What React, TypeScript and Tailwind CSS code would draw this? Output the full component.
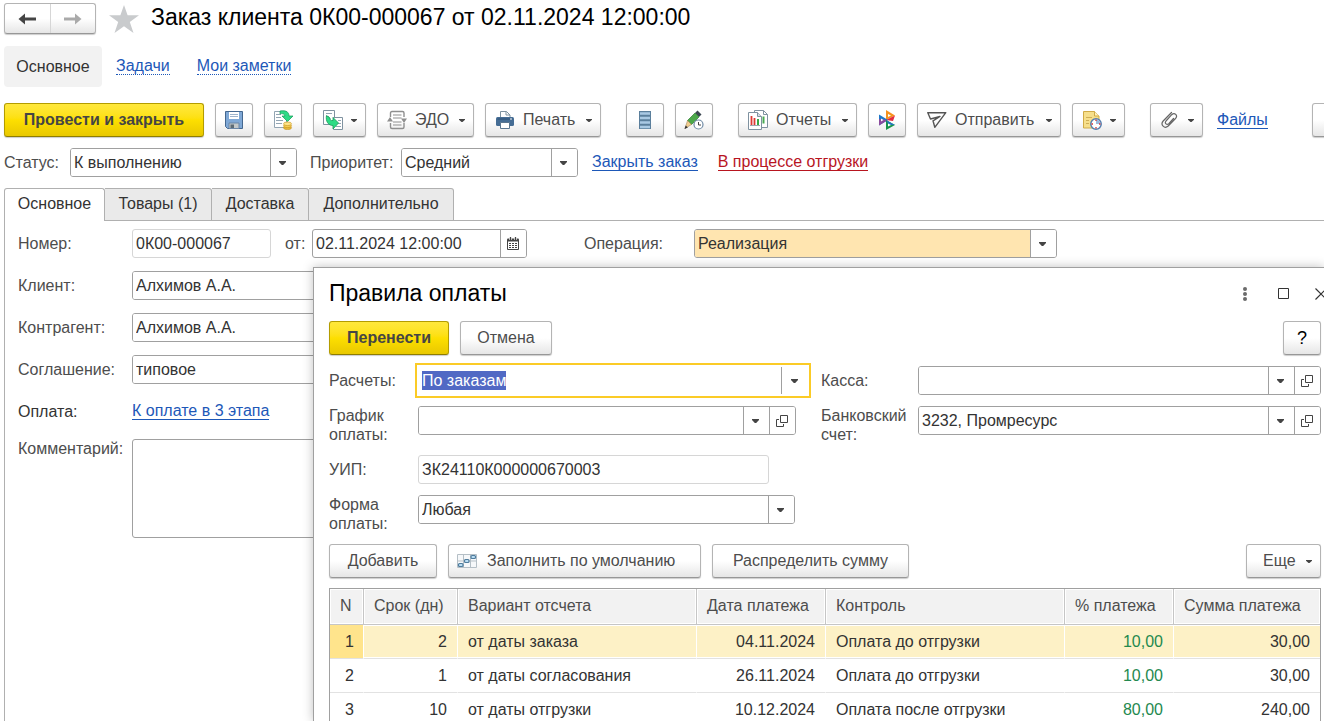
import { useEffect, useRef } from "react";
import type { ReactNode } from "react";

const stages = [
  { n: 1, days: 2, base: "от даты заказа", date: "04.11.2024", control: "Оплата до отгрузки", percent: "10,00", sum: "30,00" },
  { n: 2, days: 1, base: "от даты согласования", date: "26.11.2024", control: "Оплата до отгрузки", percent: "10,00", sum: "30,00" },
  { n: 3, days: 10, base: "от даты отгрузки", date: "10.12.2024", control: "Оплата после отгрузки", percent: "80,00", sum: "240,00" },
];

const fieldBox = "flex h-[29px] shrink-0 overflow-hidden rounded-[3px] border border-[#a0a0a0] bg-white text-[#333]";
const cellButton = "flex w-[26px] shrink-0 items-center justify-center border-l border-[#a0a0a0] bg-white pr-0.5";
const grayButton =
  "flex h-[34px] shrink-0 items-center rounded-[3px] border border-[#b4b4b4] border-b-[#979797] bg-linear-to-b from-white from-50% to-[#e6e6e6] text-[#4d4d4d] shadow-[0_1px_1px_#00000033]";
const yellowButton =
  "h-[34px] shrink-0 rounded-[3px] border border-[#b39c00] border-b-[#8f7d00] bg-linear-to-b from-[#ffe83b] via-[#fddf00] to-[#e9c800] font-bold text-[#454545] shadow-[0_1px_1px_#00000033]";
const linkStyle = "border-b border-[#1d58b8] leading-[16px] text-[#1d58b8]";

function Caret() {
  return (
    <svg width="6" height="3" viewBox="0 0 6 3" className="shrink-0" aria-hidden="true">
      <path d="M0 0h6v.8L3.500 3h-1L0 .8z" fill="#444" />
    </svg>
  );
}

function DropArrow() {
  return (
    <svg width="7" height="4" viewBox="0 0 7 4" aria-hidden="true">
      <path d="M0 0h7v1L4.200 4H2.800L0 1z" fill="#444" />
    </svg>
  );
}

function OpenCell({ label }: { label: string }) {
  return (
    <button className={cellButton} aria-label={label}>
      <svg width="12" height="12" viewBox="0 0 12 12" fill="none" stroke="#444" strokeWidth="1">
        <path d="M4.500.5h7v7h-7z" />
        <path d="M3 4.500H.5v7h7V9" />
      </svg>
    </button>
  );
}

function Combo({ id, value, width, tint, open }: { id: string; value: string; width: string; tint?: string; open?: string }) {
  return (
    <div className={`${fieldBox} ${width}`}>
      <select id={id} className={`min-w-0 flex-1 appearance-none px-[3px] outline-none ${tint ?? "bg-white"}`}>
        <option>{value}</option>
      </select>
      <span className={cellButton}>
        <DropArrow />
      </span>
      {open && <OpenCell label={open} />}
    </div>
  );
}

function ToolButton({ label, width, children }: { label: string; width: string; children: ReactNode }) {
  return (
    <button className={`${grayButton} ${width} justify-center`} aria-label={label}>
      {children}
    </button>
  );
}

function MenuButton({ label, width, children, text }: { label: string; width: string; children?: ReactNode; text?: string }) {
  return (
    <button className={`${grayButton} ${width} justify-between pr-2 pl-[9px]`} aria-label={label}>
      <span className="flex items-center gap-2">
        {children}
        {text}
      </span>
      <Caret />
    </button>
  );
}

function Svg({ children }: { children: ReactNode }) {
  return (
    <svg width="20" height="20" viewBox="0 0 20 20" fill="none" className="shrink-0" aria-hidden="true">
      {children}
    </svg>
  );
}

function SaveIcon() {
  return (
    <Svg>
      <path d="M1.500 1.500h17v17h-15l-2-2z" fill="#7fa8d6" stroke="#44678f" />
      <path d="M5 2h10v7H5z" fill="#fff" />
      <path d="M6 4.500h8M6 6.500h8" stroke="#9fb4cc" />
      <path d="M5 13h10v5.500H5z" fill="#c3c8c9" stroke="#6b87a8" />
      <path d="M6.500 14.500h3.500V18H6.500z" fill="#5d6b75" />
    </Svg>
  );
}

function PostIcon() {
  return (
    <Svg>
      <path d="M1.500 1.500h12v16h-12z" fill="#fff" stroke="#93a5b3" />
      <path d="M3 4.500h5M3 7.500h5M3 10.500h7M3 13.500h6" stroke="#93a5b3" />
      <path d="M7 1c6-1 9 1 9 5h4l-5.500 5.500L9 6h3C11.500 4 9.500 3 7 4z" fill="#2ddb85" stroke="#149a58" strokeWidth=".7" />
      <ellipse cx="14.500" cy="17.800" rx="4" ry="1.800" fill="#e8b93a" stroke="#c28f19" strokeWidth=".6" />
      <ellipse cx="14.500" cy="15.800" rx="4" ry="1.800" fill="#f5cf56" stroke="#c28f19" strokeWidth=".6" />
      <ellipse cx="14.500" cy="13.800" rx="4" ry="1.800" fill="#ffe489" stroke="#c28f19" strokeWidth=".6" />
    </Svg>
  );
}

function CreateFromIcon() {
  return (
    <Svg>
      <path d="M.5.5h11v14H.5z" fill="#fff" stroke="#7f92a0" />
      <path d="M3 3.500h6M3 6.500h3" stroke="#93a5b3" />
      <path d="M10.500 7.500h9v12h-9z" fill="#fff" stroke="#7f92a0" />
      <path d="M15 10.500h3M15 13.500h3M13 16.500h5" stroke="#93a5b3" />
      <path d="M3.500 5.500 7 8c0 2 .8 2.800 3 2.500V7.500l5.500 5.500-5.500 6v-3.500C5 15.500 2.500 11 3.500 5.500z" fill="#2ddb85" stroke="#149a58" strokeWidth=".8" />
    </Svg>
  );
}

function EdoIcon() {
  return (
    <Svg>
      <g stroke="#8f8f8f" strokeWidth="1.400">
        <path d="M3.500 7V3q0-1.500 1.500-1.500h10.500q1.500 0 1.500 1.500v4M3.500 13v4q0 1.500 1.500 1.500h10.500q1.500 0 1.500-1.500v-4" />
        <path d="M6 5h8.500M6 8h8.500M6 12h8.500M6 15h8.500" strokeWidth="1.200" />
      </g>
      <path d="M0 11.500 3 7l3 4.500zM14 8.500h6L17 13z" fill="#8f8f8f" />
    </Svg>
  );
}

function PrintIcon() {
  return (
    <Svg>
      <path d="M5.500 7.500v-6h6l3.500 3.500v3" fill="#fff" stroke="#7f92a0" />
      <path d="M11 1.500V5h4" stroke="#7f92a0" />
      <rect x="1" y="7" width="18" height="9" rx="1.500" fill="#456d95" />
      <path d="M2.500 9h15" stroke="#2f5175" />
      <path d="M15 9h2" stroke="#fff" />
      <path d="M5.500 12.500h9v6h-9z" fill="#fff" stroke="#5a7690" />
    </Svg>
  );
}

function RegisterIcon() {
  return (
    <Svg>
      <path d="M4 1h12v18H4z" fill="#5b7f9c" />
      <path d="M5 3.500h10M5 8h10M5 12.500h10M5 17h10" stroke="#a9c9e3" strokeWidth="2.600" />
    </Svg>
  );
}

function PencilClockIcon() {
  return (
    <Svg>
      <path d="m11 3 2.500-2.500 4 4L15 7z" fill="#3b4650" />
      <path d="m3.500 10.500 7.500-7.500 4 4-7.500 7.500z" fill="#4ca84a" stroke="#2c7c31" strokeWidth=".7" />
      <path d="m3.500 10.500 4 4-6.500 4z" fill="#f1cd90" stroke="#997646" strokeWidth=".5" />
      <path d="m.5 19 1.200-3.500 2.200 2z" fill="#333" />
      <circle cx="14.500" cy="14.500" r="4.500" fill="#fff" stroke="#6e8aa5" strokeWidth="1.200" />
      <path d="M14.500 12v3H17" stroke="#444" />
    </Svg>
  );
}

function ReportsIcon() {
  return (
    <Svg>
      <path d="M6.500.5h9l4 4v13h-13z" fill="#fff" stroke="#7f92a0" />
      <path d="M15.500 6.500v7" stroke="#49ab52" strokeWidth="2" />
      <path d="M15.500.5v4h4" stroke="#7f92a0" />
      <path d="M.5 2.500h9l4 4v13H.5z" fill="#fff" stroke="#7f92a0" />
      <path d="M9.500 2.500v4h4" fill="#d7dee4" stroke="#7f92a0" />
      <path d="M3.500 6v9M6.500 8v7" stroke="#dc3b35" strokeWidth="1.800" />
      <path d="M10 9v6" stroke="#37a846" strokeWidth="2" />
      <path d="M2 15.500h10" stroke="#9ba7b0" />
    </Svg>
  );
}

function KonturIcon() {
  return (
    <Svg>
      <path d="M9 0v10l9-4.500z" fill="#f6921e" />
      <path d="m9 10 9-4.500-2 5.500-7-1z" fill="#e22b42" />
      <path d="M2 4.500v11L11 10z" fill="#1e78c8" />
      <path d="M2 15.500V9l9 1z" fill="#8b4b9d" />
      <path d="m9 10 9 5-9 5z" fill="#18964b" />
      <path d="m9 10 9 5h-6z" fill="#2377bd" />
      <path d="M11 4v3l3-1.500zM4 8.500v3L6.500 10zM11 13.500v3l3-1.500z" fill="#fff" />
    </Svg>
  );
}

function SendIcon() {
  return (
    <Svg>
      <path
        d="M.8 2.700h18L7.800 17.300 6 10.800l7-4.300L3.500 9z"
        stroke="#555"
        strokeWidth="1.400"
        strokeLinejoin="round"
      />
    </Svg>
  );
}

function NoteClockIcon() {
  return (
    <Svg>
      <path d="M1.500 1.500h11L17 6v12H1.500z" fill="#f6df8b" stroke="#d0ab47" />
      <path d="M12.500 1.500V6H17" fill="#fff1bd" stroke="#d0ab47" />
      <path d="M4 7.500h6M4 10.500h3M4 13.500h3" stroke="#cfae55" />
      <circle cx="14" cy="14" r="5.200" fill="#fff" stroke="#557eae" strokeWidth="1.500" />
      <path d="M14 14V9.500a4.500 4.500 0 0 1 4.500 4.500z" fill="#9ab9dc" />
      <path d="M14 9.500v1.500M14 17v1.500M9.500 14H11M17 14h1.500" stroke="#d33" strokeWidth="1.300" />
    </Svg>
  );
}

function ClipIcon() {
  return (
    <Svg>
      <path
        d="M11.500 2.500 3.200 11c-3.200 3.800 1.300 8.300 5 5L15.500 8.500c2.800-3.300-1-6.500-3.800-3.800L6 11c-1.800 2.300.8 4.500 2.800 2.600L13.500 8.500"
        stroke="#666"
        strokeWidth="1.200"
        strokeLinecap="round"
      />
    </Svg>
  );
}

function FillIcon() {
  return (
    <Svg>
      <path d="M.5 3.500h19v13H.5zM6.500 3.500v13M13.500 3.500v13M.5 10h19" fill="#f6f8fa" stroke="#b5bfc6" />
      <g fill="#b9dcf2" stroke="#4f7c9d" strokeWidth="1.200">
        <rect x="1.500" y="12.500" width="4.500" height="3" rx="1" />
        <rect x="7.500" y="8.500" width="4.500" height="3" rx="1" />
        <rect x="14" y="4.500" width="4.500" height="3" rx="1" />
      </g>
    </Svg>
  );
}

function Toolbar() {
  return (
    <div className="mt-4 flex gap-[11px] pl-1">
      <button className={`${yellowButton} w-[200px]`}>Провести и закрыть</button>
      <ToolButton label="Записать" width="w-[38px]"><SaveIcon /></ToolButton>
      <ToolButton label="Провести" width="w-[38px]"><PostIcon /></ToolButton>
      <MenuButton label="Создать на основании" width="w-[53px]"><CreateFromIcon /></MenuButton>
      <MenuButton label="ЭДО" width="w-[97px]" text="ЭДО"><EdoIcon /></MenuButton>
      <MenuButton label="Печать" width="w-[116px]" text="Печать"><PrintIcon /></MenuButton>
      <div className="ml-3.5 flex gap-[11px]">
        <ToolButton label="Движения документа" width="w-[38px]"><RegisterIcon /></ToolButton>
        <ToolButton label="История изменений" width="w-[38px]"><PencilClockIcon /></ToolButton>
      </div>
      <div className="ml-3.5 flex gap-[11px]">
        <MenuButton label="Отчеты" width="w-[119px]" text="Отчеты"><ReportsIcon /></MenuButton>
        <ToolButton label="Контрагент" width="w-[38px]"><KonturIcon /></ToolButton>
        <MenuButton label="Отправить" width="w-[144px]" text="Отправить"><SendIcon /></MenuButton>
        <MenuButton label="Напоминания" width="w-[53px]"><NoteClockIcon /></MenuButton>
      </div>
      <div className="ml-3.5 flex items-center gap-3.5">
        <MenuButton label="Прикрепить" width="w-[53px]"><ClipIcon /></MenuButton>
        <a href="#files" className={linkStyle}>Файлы</a>
      </div>
      <button className={`${grayButton} ml-[33px] w-[90px] justify-center`} aria-label="Еще" />
    </div>
  );
}

function OrderForm() {
  const label = "w-[114px] shrink-0 leading-[19px] text-[#4d4d4d]";
  return (
    <div className="ml-1 flex flex-1 flex-col gap-[13px] border-l border-[#b0b0b0] pt-2 pl-[13px]">
      <div className="flex items-center">
        <label htmlFor="number" className={label}>Номер:</label>
        <input id="number" readOnly defaultValue="0К00-000067" className="h-[29px] w-[139px] rounded-[3px] border border-[#d6d6d6] px-[3px] text-[#333] outline-none" />
        <label htmlFor="date" className="ml-3.5 w-[27px] text-[#4d4d4d]">от:</label>
        <div className={`${fieldBox} w-[215px]`}>
          <input id="date" defaultValue="02.11.2024 12:00:00" className="min-w-0 flex-1 px-[3px] outline-none" />
          <button className={cellButton} aria-label="Выбрать дату">
            <svg width="12" height="13" viewBox="0 0 12 13" fill="none">
              <path d="M1 1.500h10q1 0 1 1V12q0 1-1 1H1q-1 0-1-1V2.500q0-1 1-1z" fill="#444" />
              <path d="M1 4.500h10V12H1z" fill="#fff" />
              <path d="M3.500 0v3M8.500 0v3" stroke="#fff" strokeWidth="2.400" />
              <path d="M3.500 0v3M8.500 0v3" stroke="#444" strokeWidth="1.300" />
              <path d="M2 6.500h2m1 0h2m1 0h2M2 8.500h2m1 0h2m1 0h2M2 10.500h2m1 0h2m1 0h2" stroke="#444" strokeWidth="1.200" />
            </svg>
          </button>
        </div>
        <label htmlFor="operation" className="ml-[57px] w-[110px] text-[#4d4d4d]">Операция:</label>
        <Combo id="operation" value="Реализация" width="w-[363px]" tint="bg-[#ffe5b0]" />
      </div>
      <div className="flex items-center">
        <label htmlFor="client" className={label}>Клиент:</label>
        <Combo id="client" value="Алхимов А.А." width="w-[395px]" />
      </div>
      <div className="flex items-center">
        <label htmlFor="partner" className={label}>Контрагент:</label>
        <Combo id="partner" value="Алхимов А.А." width="w-[395px]" />
      </div>
      <div className="flex items-center">
        <label htmlFor="agreement" className={label}>Соглашение:</label>
        <Combo id="agreement" value="типовое" width="w-[395px]" />
      </div>
      <div className="flex h-[29px] items-center">
        <span className="w-[114px] text-[#333]">Оплата:</span>
        <a href="#payment" className={linkStyle}>К оплате в 3 этапа</a>
      </div>
      <div className="flex">
        <label htmlFor="comment" className={label}>Комментарий:</label>
        <textarea id="comment" className="h-[99px] w-[395px] resize-none rounded-[3px] border border-[#a0a0a0] outline-none" />
      </div>
    </div>
  );
}

function StagesTable() {
  const th = "h-[36px] border-r border-b border-[#c6c6c6] bg-[#f2f2f2] px-2.5 pb-0.5 font-normal shadow-[inset_0_0_0_1px_#fff] last:border-r-0";
  return (
    <table className="mt-2.5 w-full table-fixed border-separate border-spacing-0 border border-b-0 border-[#a0a0a0] text-[#333]">
      <colgroup>
        <col className="w-[34px]" />
        <col className="w-[94px]" />
        <col />
        <col className="w-[129px]" />
        <col />
        <col className="w-[109px]" />
        <col className="w-[146px]" />
      </colgroup>
      <thead>
        <tr className="text-left whitespace-nowrap text-[#4d4d4d]">
          <th className={th}>N</th>
          <th className={th}>Срок (дн)</th>
          <th className={th}>Вариант отсчета</th>
          <th className={th}>Дата платежа</th>
          <th className={th}>Контроль</th>
          <th className={th}>% платежа</th>
          <th className={th}>Сумма платежа</th>
        </tr>
      </thead>
      <tbody>
        {stages.map((s) => {
          const active = s.n === 1;
          const td = `h-[34px] border-r border-b border-r-white border-b-[#e2e2e2] px-2.5 last:border-r-0 ${active ? "bg-[#fdf1c6] shadow-[inset_0_1px_#fff,inset_0_-1px_#fff]" : ""}`;
          return (
            <tr key={s.n}>
              <td className={`h-[34px] border-r border-b border-r-white border-b-[#e2e2e2] pr-[9px] text-right ${active ? "bg-[#ffe48c]" : ""}`}>{s.n}</td>
              <td className={`${td} text-right`}>{s.days}</td>
              <td className={td}>{s.base}</td>
              <td className={`${td} text-right`}>{s.date}</td>
              <td className={td}>{s.control}</td>
              <td className={`${td} text-right text-[#24894f]`}>{s.percent}</td>
              <td className={`${td} text-right`}>{s.sum}</td>
            </tr>
          );
        })}
      </tbody>
    </table>
  );
}

function PaymentDialog() {
  const calcRef = useRef<HTMLInputElement>(null);

  useEffect(() => {
    calcRef.current?.focus();
    calcRef.current?.select();
  }, []);

  return (
    <section
      role="dialog"
      aria-label="Правила оплаты"
      className="absolute top-[267px] right-0 bottom-0 left-[313px] overflow-hidden border-t border-l border-[#a0a0a0] bg-white pr-[3px] pl-[15px] shadow-[0_0_10px_#00000040]"
    >
      <header className="mb-0.5 flex h-[51px] items-center">
        <h2 className="flex-1 text-[23px] text-black">Правила оплаты</h2>
        <button aria-label="Меню" className="mr-[31px]">
          <svg width="4" height="16" viewBox="0 0 4 16" fill="#6b6b6b">
            <circle cx="2" cy="3" r="2" />
            <circle cx="2" cy="8" r="2" />
            <circle cx="2" cy="13" r="2" />
          </svg>
        </button>
        <button aria-label="Развернуть" className="mr-[26px]">
          <svg width="11" height="11" viewBox="0 0 11 11">
            <path d="M.5.5h10v10H.5z" fill="none" stroke="#333" />
          </svg>
        </button>
        <button aria-label="Закрыть" className="-mr-1.5 shrink-0">
          <svg width="12" height="12" viewBox="0 0 12 12">
            <path d="m.5.5 11 11m0-11-11 11" stroke="#333" strokeWidth="1.200" />
          </svg>
        </button>
      </header>

      <div className="flex gap-[11px]">
        <button className={`${yellowButton} w-[120px]`}>Перенести</button>
        <button className={`${grayButton} w-[92px] justify-center`}>Отмена</button>
        <button className={`${grayButton} ml-auto w-[38px] justify-center text-lg text-black`}>?</button>
      </div>

      <div className="mt-[11px] grid grid-cols-[89px_403px_97px_1fr] items-start gap-y-[11px] leading-[19px] text-[#4d4d4d]">
        <label htmlFor="calc" className="pt-[5px]">Расчеты:</label>
        <div className="flex h-[29px] w-[390px] items-center bg-white outline-2 outline-offset-1 outline-[#fbcb26]">
          <input
            id="calc"
            ref={calcRef}
            defaultValue="По заказам"
            className="h-[19px] min-w-0 flex-1 px-1 text-[#333] caret-transparent outline-none selection:bg-[#5068c4fd] selection:text-white"
          />
          <span className="flex h-[27px] w-[27px] items-center justify-center border-l border-[#a0a0a0] pr-0.5">
            <DropArrow />
          </span>
        </div>
        <label htmlFor="cash" className="pt-[5px]">Касса:</label>
        <Combo id="cash" value="" width="w-full" open="Открыть кассу" />

        <label htmlFor="schedule">График оплаты:</label>
        <Combo id="schedule" value="" width="w-[378px]" open="Открыть график" />
        <label htmlFor="account">Банковский счет:</label>
        <Combo id="account" value="3232, Промресурс" width="w-full" open="Открыть счет" />

        <label htmlFor="uip" className="pt-[5px]">УИП:</label>
        <input id="uip" readOnly defaultValue="ЗК24110К000000670003" className="col-span-3 h-[29px] w-[351px] rounded-[3px] border border-[#d6d6d6] px-[3px] text-[#333] outline-none" />

        <label htmlFor="form">Форма оплаты:</label>
        <div className="col-span-3">
          <Combo id="form" value="Любая" width="w-[377px]" />
        </div>
      </div>

      <div className="mt-[11px] flex gap-[11px]">
        <button className={`${grayButton} w-[108px] justify-center`}>Добавить</button>
        <button className={`${grayButton} w-[253px] gap-2.5 pl-2`}>
          <FillIcon />
          Заполнить по умолчанию
        </button>
        <button className={`${grayButton} w-[197px] justify-center`}>Распределить сумму</button>
        <button className={`${grayButton} ml-auto w-[75px] justify-between pr-2 pl-4`}>
          Еще
          <Caret />
        </button>
      </div>

      <StagesTable />
    </section>
  );
}

export default function App() {
  const tab = "h-full rounded-tr-[3px] border-t border-r border-b border-[#b0b0b0] bg-[#eaeaea] pb-0.5";
  return (
    <main className="relative flex h-screen flex-col overflow-hidden bg-white font-['Liberation_Sans',Arial,sans-serif] text-base text-[#333]">
      <header className="flex items-center pt-[3px] pl-1">
        <div className="flex h-[31px] w-[92px] rounded-[3px] border border-[#b4b4b4] border-b-[#979797] bg-linear-to-b from-white from-50% to-[#e6e6e6] shadow-[0_1px_1px_#00000033]">
          <button className="flex flex-1 items-center justify-center border-r border-[#d6d6d6]" aria-label="Назад">
            <svg width="18" height="12" viewBox="0 0 18 12" fill="none" stroke="#444" strokeWidth="3">
              <path d="M18 6H4" />
              <path d="M.5 6 7 .5v11z" fill="#444" stroke="none" />
            </svg>
          </button>
          <button className="flex flex-1 items-center justify-center" aria-label="Вперед">
            <svg width="18" height="12" viewBox="0 0 18 12" fill="none" stroke="#aaa" strokeWidth="3">
              <path d="M0 6h14" />
              <path d="M17.500 6 11 .5v11z" fill="#aaa" stroke="none" />
            </svg>
          </button>
        </div>
        <svg width="30" height="28" viewBox="0 0 30 28" className="ml-[13px]" aria-hidden="true">
          <path d="m15 0 3.600 10.300H30l-9.200 6.700L24.500 28 15 21.300 5.500 28l3.700-11L0 10.300h11.400z" fill="#c9cbcd" />
        </svg>
        <h1 className="ml-3 pb-0.5 text-[23px] leading-[29px] whitespace-nowrap text-black">Заказ клиента 0К00-000067 от 02.11.2024 12:00:00</h1>
      </header>

      <nav className="mt-3 flex h-[41px] items-center pl-1">
        <span className="flex h-full w-[98px] items-center justify-center rounded-[4px] bg-[#f2f2f2]">Основное</span>
        <a href="#tasks" className="ml-3.5 border-b border-dotted border-[#1d58b8] leading-[16px] text-[#1d58b8]">Задачи</a>
        <a href="#notes" className="ml-[27px] border-b border-dotted border-[#1d58b8] leading-[16px] text-[#1d58b8]">Мои заметки</a>
      </nav>

      <Toolbar />

      <div className="mt-[11px] flex items-center pl-1 text-[#4d4d4d]">
        <label htmlFor="status" className="w-[66px]">Статус:</label>
        <Combo id="status" value="К выполнению" width="w-[227px]" />
        <label htmlFor="priority" className="ml-[13px] w-[91px]">Приоритет:</label>
        <Combo id="priority" value="Средний" width="w-[177px]" />
        <a href="#close" className={`${linkStyle} ml-3.5`}>Закрыть заказ</a>
        <a href="#shipping" className="ml-5 border-b border-[#b8151f] leading-[16px] text-[#b8151f]">В процессе отгрузки</a>
      </div>

      <div className="mt-[11px] flex h-[33px] pl-1" role="tablist">
        <button role="tab" aria-selected="true" className="h-full w-[101px] rounded-t-[3px] border border-b-0 border-[#b0b0b0] bg-white pb-0.5">Основное</button>
        <button role="tab" className={`${tab} w-[107px]`}>Товары (1)</button>
        <button role="tab" className={`${tab} w-[97px]`}>Доставка</button>
        <button role="tab" className={`${tab} w-[145px]`}>Дополнительно</button>
        <div className="flex-1 border-b border-[#b0b0b0]" />
      </div>

      <OrderForm />
      <PaymentDialog />
    </main>
  );
}
